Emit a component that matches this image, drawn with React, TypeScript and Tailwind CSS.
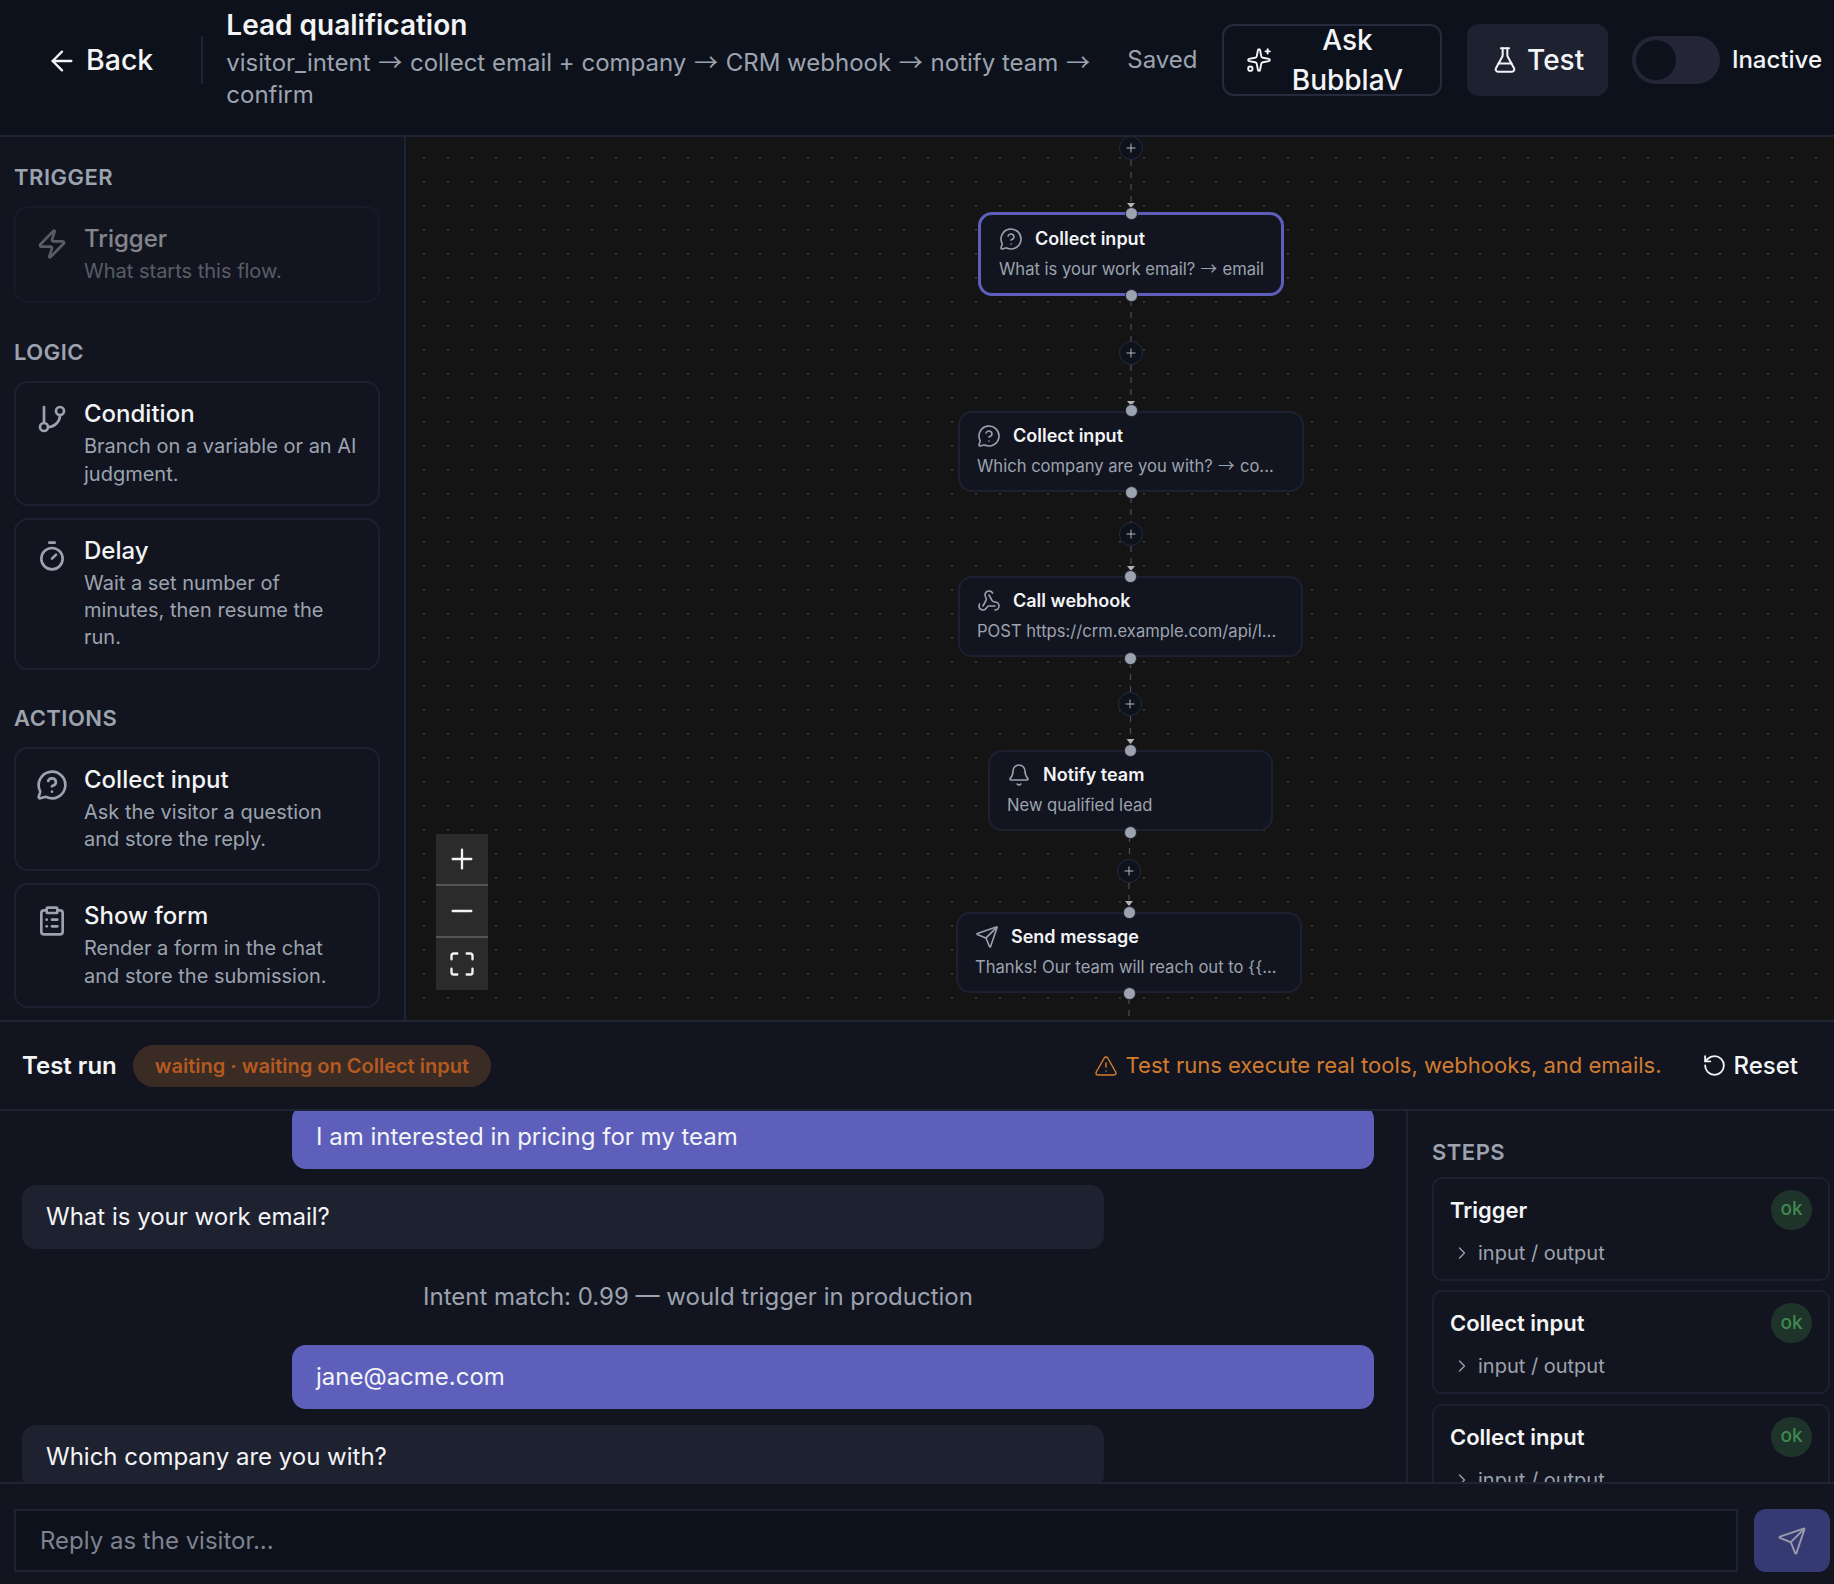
import React from "react";
import {
  ArrowLeft, Sparkles, FlaskConical, Zap, GitBranch, Timer, MessageCircleQuestion, ClipboardList,
  Plus, Minus, Maximize, Webhook, Bell, Send, TriangleAlert, RotateCcw, ChevronRight,
} from "lucide-react";

const ORIGIN_X = 406;
const ORIGIN_Y = 137;

function Arrow() {
  return <span className="mx-[0.04em] font-['Noto_Sans_CJK_SC',sans-serif] leading-none">→</span>;
}

function PaletteCard({ icon: Icon, title, desc, dim }: { icon: any; title: string; desc: string; dim?: boolean }) {
  return (
    <div className={`flex gap-[16px] rounded-[14px] border-2 border-[#1d2030] bg-[#12151f] pb-[16px] pl-[20px] pr-[16px] pt-[19px] ${dim ? "opacity-50" : ""}`}>
      <Icon size={32} strokeWidth={2} className="mt-[1px] shrink-0 text-[#9ca3af]" />
      <div className="min-w-0">
        <div className="mb-[7px] text-[24px] leading-[24px] font-medium text-[#f3f4f6]">{title}</div>
        <div className="text-[20px] leading-[27.3px] text-[#9ca3af]">{desc}</div>
      </div>
    </div>
  );
}

function SectionLabel({ children, className = "" }: { children: React.ReactNode; className?: string }) {
  return <div className={`text-[22px] leading-[28px] font-semibold uppercase tracking-[0.5px] text-[#9ca3af] ${className}`}>{children}</div>;
}

function FlowNode({ x, y, w, h, icon: Icon, title, desc, selected }: { x: number; y: number; w: number; h: number; icon: any; title: React.ReactNode; desc: React.ReactNode; selected?: boolean }) {
  return (
    <div
      className={`absolute rounded-[14px] bg-[#12151f] ${selected ? "border-[3px] border-[#5d5fbb] pl-[18px] pt-[11px]" : "border-2 border-[#1d2030] pl-[17px] pt-[10px]"}`}
      style={{ left: x - ORIGIN_X, top: y - ORIGIN_Y, width: w, height: h }}
    >
      <div className="flex items-center gap-[12px]">
        <Icon size={24} strokeWidth={1.6} className="shrink-0 text-[#9ca3af]" />
        <span className="text-[18px] leading-[26px] font-semibold text-[#f3f4f6]">{title}</span>
      </div>
      <div className="mt-[4px] whitespace-nowrap text-[16.6px] leading-[26px] text-[#9ca3af]">{desc}</div>
    </div>
  );
}

function Handle({ x, y }: { x: number; y: number }) {
  return <div className="absolute h-[11px] w-[11px] rounded-full bg-[#9ca3af] ring-1 ring-[#2a2d3a]" style={{ left: x - ORIGIN_X - 5.5, top: y - ORIGIN_Y - 5.5 }} />;
}

function AddButton({ x, y }: { x: number; y: number }) {
  return (
    <div className="absolute flex h-[24px] w-[24px] items-center justify-center rounded-full border border-[#262a3f] bg-[#0e121c] text-[#c5c9d3]" style={{ left: x - ORIGIN_X - 12, top: y - ORIGIN_Y - 12 }}>
      <Plus size={14} strokeWidth={1.5} />
    </div>
  );
}

const edges: [number, number, number, boolean][] = [
  [1131, 160, 202, true],
  [1131, 300, 341, false],
  [1131, 365, 400, true],
  [1131, 497, 522, false],
  [1131, 546, 565, true],
  [1130.5, 662, 692, false],
  [1130.5, 716, 738, true],
  [1129.5, 836, 859, false],
  [1129, 883, 900, true],
  [1129, 998, 1021, false],
];

function Edges() {
  return (
    <svg className="absolute inset-0 h-full w-full" aria-hidden="true">
      {edges.map(([x, a, b, arrow], i) => (
        <g key={i} transform={`translate(${-ORIGIN_X} ${-ORIGIN_Y})`}>
          <line x1={x} y1={a} x2={x} y2={b} stroke="#4b4f58" strokeWidth="1.2" strokeDasharray="6 6" />
          {arrow && <polygon points={`${x - 4},${b + 1} ${x + 4},${b + 1} ${x},${b + 6}`} fill="#b1b1b7" />}
        </g>
      ))}
    </svg>
  );
}

function Bubble({ mine, className = "", children }: { mine?: boolean; className?: string; children: React.ReactNode }) {
  return (
    <div className={`h-[64px] w-[1082px] shrink-0 rounded-[14px] px-[24px] text-[24px] leading-[64px] text-[#f3f4f6] ${mine ? "self-end bg-[#5d5fbb]" : "self-start bg-[#1e2130]"} ${className}`}>
      {children}
    </div>
  );
}

function StepCard({ title }: { title: string }) {
  return (
    <div className="h-[104px] shrink-0 rounded-[10px] border-2 border-[#1d2030] px-[16px] pt-[11px]">
      <div className="flex items-center justify-between">
        <span className="text-[22px] leading-[40px] font-semibold text-[#f3f4f6]">{title}</span>
        <span className="flex h-[40px] w-[41px] items-center justify-center rounded-full bg-[#1e3329] text-[19px] font-medium text-[#3f8a4f]">ok</span>
      </div>
      <div className="mt-[8px] flex items-center gap-[6px] pl-[2px] text-[#9ca3af]">
        <ChevronRight size={20} strokeWidth={1.5} />
        <span className="text-[20px] leading-[30px]">input / output</span>
      </div>
    </div>
  );
}

export default function App() {
  return (
    <div className="flex h-[1584px] w-full flex-col overflow-hidden bg-[#12151f] font-['Inter',sans-serif] text-[#f3f4f6]">
      <header className="flex h-[137px] shrink-0 items-center border-b-2 border-[#1f2333] bg-[#0d111b] pb-[16px] pl-[46px] pr-[12px]">
        <div className="mt-[2px] flex items-center gap-[8px]">
          <ArrowLeft size={32} strokeWidth={1.75} />
          <span className="text-[28.5px] font-medium">Back</span>
        </div>
        <div className="ml-[48px] h-[48px] w-[2px] bg-[#1f2333]" />
        <div className="ml-[23px] w-[880px] shrink-0">
          <div className="-mt-[6px] text-[28px] leading-[44px] font-semibold">Lead qualification</div>
          <div className="text-[24px] leading-[32px] text-[#9ca3af]">visitor_intent <Arrow /> collect email + company <Arrow /> CRM webhook <Arrow /> notify team <Arrow /> confirm</div>
        </div>
        <span className="ml-[21px] text-[24px] text-[#9ca3af]">Saved</span>
        <button className="ml-[24px] flex h-[72px] w-[221px] items-center rounded-[12px] border-2 border-[#262a3d] pl-[22px]">
          <Sparkles size={26} strokeWidth={1.75} className="shrink-0" />
          <span className="flex-1 pr-[17px] text-center text-[28px] leading-[40px] font-medium">Ask BubblaV</span>
        </button>
        <button className="ml-[25px] flex h-[72px] w-[141px] items-center justify-center gap-[8px] rounded-[12px] bg-[#1e2130]">
          <FlaskConical size={28} strokeWidth={1.75} />
          <span className="text-[28px] font-medium">Test</span>
        </button>
        <div className="relative ml-[24px] h-[48px] w-[88px] rounded-full bg-[#242638]">
          <div className="absolute left-[4px] top-[4px] h-[40px] w-[40px] rounded-full bg-[#0d111b]" />
        </div>
        <span className="ml-[12px] whitespace-nowrap text-[24px] font-medium">Inactive</span>
      </header>

      <div className="flex h-[885px] shrink-0 border-b-2 border-[#1f2333]">
        <aside className="w-[406px] shrink-0 overflow-hidden border-r-2 border-[#1f2333] bg-[#12151f] pl-[14px] pr-[24px] pt-[26px]">
          <SectionLabel className="mb-[15px]">Trigger</SectionLabel>
          <PaletteCard dim icon={Zap} title="Trigger" desc="What starts this flow." />
          <SectionLabel className="mb-[15px] mt-[35px]">Logic</SectionLabel>
          <div className="flex flex-col gap-[12px]">
            <PaletteCard icon={GitBranch} title="Condition" desc="Branch on a variable or an AI judgment." />
            <PaletteCard icon={Timer} title="Delay" desc="Wait a set number of minutes, then resume the run." />
          </div>
          <SectionLabel className="mb-[15px] mt-[34px]">Actions</SectionLabel>
          <div className="flex flex-col gap-[12px]">
            <PaletteCard icon={MessageCircleQuestion} title="Collect input" desc="Ask the visitor a question and store the reply." />
            <PaletteCard icon={ClipboardList} title="Show form" desc="Render a form in the chat and store the submission." />
          </div>
        </aside>

        <main className="relative min-w-0 flex-1 overflow-hidden bg-[#141414] bg-[radial-gradient(#363636_0.8px,transparent_1px)] bg-[size:24px_24px] bg-[position:6px_9px]">
          <Edges />
          <FlowNode selected x={978} y={212} w={306} h={84} icon={MessageCircleQuestion} title="Collect input" desc={<>What is your work email? <Arrow /> email</>} />
          <FlowNode x={958} y={411} w={346} h={81} icon={MessageCircleQuestion} title="Collect input" desc={<>Which company are you with? <Arrow /> co...</>} />
          <FlowNode x={958} y={576} w={345} h={81} icon={Webhook} title="Call webhook" desc="POST https://crm.example.com/api/l..." />
          <FlowNode x={988} y={750} w={285} h={81} icon={Bell} title="Notify team" desc="New qualified lead" />
          <FlowNode x={956} y={912} w={346} h={81} icon={Send} title="Send message" desc="Thanks! Our team will reach out to {{..." />
          {[[1131, 213], [1131, 295], [1131, 410], [1131, 492], [1130.5, 576], [1130.5, 658], [1130, 750], [1130, 832], [1129, 912], [1129, 993]].map(([x, y], i) => (
            <Handle key={i} x={x} y={y} />
          ))}
          <AddButton x={1131} y={148} />
          <AddButton x={1131} y={353} />
          <AddButton x={1131} y={534} />
          <AddButton x={1130} y={704} />
          <AddButton x={1129} y={871} />
          <div className="absolute left-[30px] top-[697px] flex w-[52px] flex-col bg-[#2b2b2b] text-[#f3f4f6]">
            <div className="flex h-[52px] items-center justify-center border-b-2 border-[#555]"><Plus size={32} strokeWidth={1.75} /></div>
            <div className="flex h-[52px] items-center justify-center border-b-2 border-[#555]"><Minus size={32} strokeWidth={1.75} /></div>
            <div className="flex h-[52px] items-center justify-center"><Maximize size={28} strokeWidth={2} /></div>
          </div>
        </main>
      </div>

      <section className="flex min-h-0 flex-1 flex-col bg-[#12151f]">
        <div className="flex h-[89px] shrink-0 items-center border-b-2 border-[#1f2333] pl-[22px] pr-[36px]">
          <span className="text-[24px] font-semibold">Test run</span>
          <span className="ml-[16px] flex h-[42px] items-center rounded-full bg-[#3a2b25] px-[22px] text-[20px] font-semibold text-[#b45a21]">waiting · waiting on Collect input</span>
          <div className="ml-auto flex items-center gap-[8px] text-[#d27c2e]">
            <TriangleAlert size={24} strokeWidth={1.5} />
            <span className="text-[22px]">Test runs execute real tools, webhooks, and emails.</span>
          </div>
          <div className="ml-[41px] flex items-center gap-[6px]">
            <RotateCcw size={25} strokeWidth={1.75} />
            <span className="text-[24px] font-medium">Reset</span>
          </div>
        </div>

        <div className="flex min-h-0 flex-1 overflow-hidden">
          <div className="flex w-[1406px] shrink-0 flex-col gap-[16px] overflow-hidden pl-[22px] pr-[32px]">
            <Bubble mine className="-mt-[6px]">I am interested in pricing for my team</Bubble>
            <Bubble>What is your work email?</Bubble>
            <div className="my-[16px] h-[32px] shrink-0 text-center text-[24px] leading-[32px] text-[#9ca3af]">Intent match: 0.99 — would trigger in production</div>
            <Bubble mine>jane@acme.com</Bubble>
            <Bubble>Which company are you with?</Bubble>
          </div>
          <div className="flex min-w-0 flex-1 flex-col gap-[9.5px] overflow-hidden border-l-2 border-[#1f2333] pl-[24px] pr-[4px] pt-[27px]">
            <SectionLabel className="mb-[1px]">Steps</SectionLabel>
            <StepCard title="Trigger" />
            <StepCard title="Collect input" />
            <StepCard title="Collect input" />
          </div>
        </div>

        <div className="flex h-[102px] shrink-0 items-start gap-[16px] border-t-2 border-[#1f2333] pl-[14px] pr-[4px] pt-[25px]">
          <div className="flex h-[63px] flex-1 items-center border-2 border-[#1f2333] bg-[#0d111b] px-[24px] text-[24px] text-[#7d838f]">Reply as the visitor...</div>
          <button className="flex h-[63px] w-[76px] items-center justify-center rounded-[12px] bg-[#363a72] text-[#9a9cab]">
            <Send size={30} strokeWidth={1.5} />
          </button>
        </div>
      </section>
    </div>
  );
}
